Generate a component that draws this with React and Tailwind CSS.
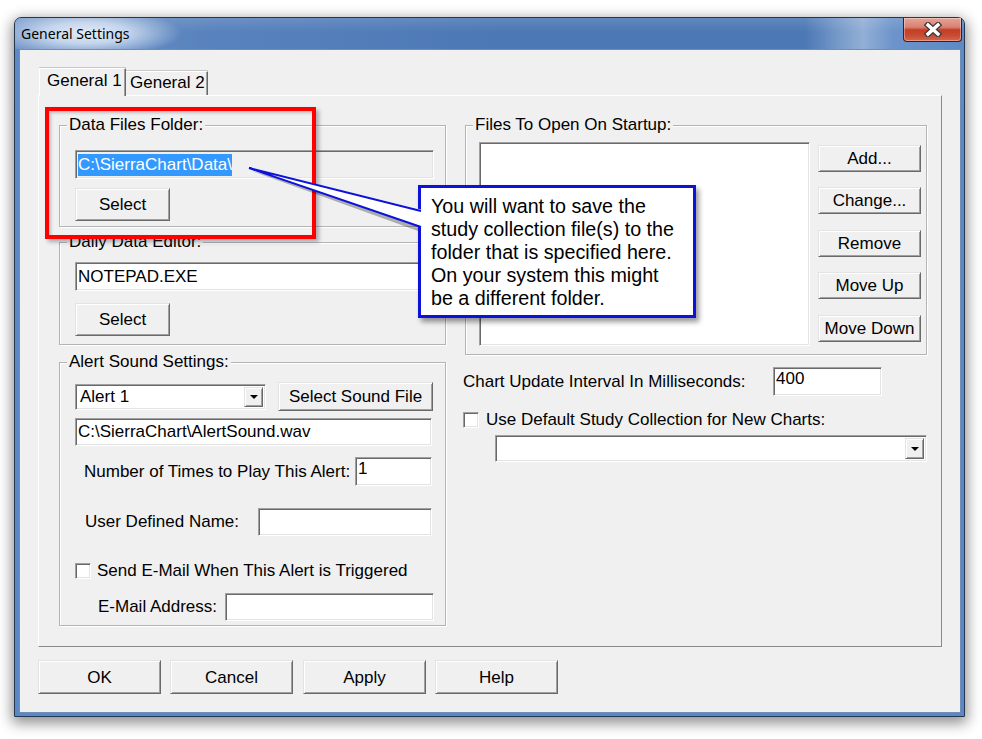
import React from "react";

const raised =
  "border border-t-[#e3e3e3] border-l-[#e3e3e3] border-r-[#696969] border-b-[#696969] shadow-[inset_1px_1px_0_#ffffff,inset_-1px_-1px_0_#a0a0a0] bg-[#f0f0f0]";
const sunken =
  "border border-t-[#a0a0a0] border-l-[#a0a0a0] border-r-white border-b-white shadow-[inset_1px_1px_0_#696969,inset_-1px_-1px_0_#e3e3e3]";

function Group({ label, className = "", children }) {
  return (
    <div
      className={`relative border border-[#b4b4b4] shadow-[inset_1px_1px_0_#ffffff,1px_1px_0_#ffffff] ${className}`}
    >
      <span className="absolute -top-[11px] left-[7px] px-[2px] bg-[#f0f0f0] leading-[20px] whitespace-nowrap">
        {label}
      </span>
      {children}
    </div>
  );
}

function Btn({ children, className = "" }) {
  return (
    <button
      type="button"
      className={`${raised} flex items-center justify-center leading-none whitespace-nowrap ${className}`}
    >
      {children}
    </button>
  );
}

function Input({ children, className = "" }) {
  return (
    <div
      className={`${sunken} flex items-center pl-[2px] leading-[20px] whitespace-nowrap overflow-hidden ${className}`}
    >
      {children}
    </div>
  );
}

function Tri() {
  return (
    <svg width="8" height="4" viewBox="0 0 8 4">
      <path d="M0 0H8L4 4Z" fill="#000" />
    </svg>
  );
}

function Combo({ text, className = "" }) {
  return (
    <div className={`${sunken} bg-white flex items-stretch p-[2px] ${className}`}>
      <div className="flex-1 flex items-center pl-[2px] leading-[20px] whitespace-nowrap">
        {text}
      </div>
      <div className={`${raised} w-[19px] flex items-center justify-center`}>
        <Tri />
      </div>
    </div>
  );
}

function Check() {
  return <div className={`${sunken} w-[16px] h-[16px] bg-white shrink-0`} />;
}

export default function App() {
  return (
    <div className="relative w-[982px] h-[739px] bg-white overflow-hidden font-['Liberation_Sans',Arial,sans-serif] text-[17px] text-black">
      {/* Window */}
      <div className="ml-[14px] mt-[17px] w-[951px] h-[700px] rounded-t-[7px] border border-[#26384f] bg-[linear-gradient(180deg,#5d89c4,#5a87c5)] shadow-[0_4px_14px_2px_rgba(0,0,0,0.45)] flex flex-col">
        {/* Title bar */}
        <div className="h-[31px] flex items-start rounded-t-[6px] bg-[radial-gradient(ellipse_95px_24px_at_72px_15px,rgba(232,240,250,0.97),rgba(225,235,248,0.75)_45%,rgba(225,235,248,0)_100%),linear-gradient(180deg,rgba(255,255,255,0.12),rgba(255,255,255,0)_45%),linear-gradient(90deg,#6f94c7_0px,#5882bd_200px,#4c78b5_480px,#4c78b5_790px,#7c9ecc_828px,#92afd6_848px,#6d94ca_878px,#5d89c5_949px)]">
          <div className="pl-[6px] pt-[6px] leading-[20px] font-['Noto_Sans',sans-serif] text-[14px] text-black">
            General Settings
          </div>
          <button
            type="button"
            className="ml-auto mr-[2px] w-[59px] h-[24px] rounded-b-[4px] border border-t-0 border-[#4a1b16] bg-[linear-gradient(180deg,#e6a396_0%,#d98170_40%,#c23d28_52%,#c84a33_75%,#d9654a_100%)] shadow-[inset_0_0_0_1px_rgba(255,255,255,0.35)] flex items-center justify-center"
          >
            <svg width="18" height="15" viewBox="0 0 18 15">
              <path d="M4 3L14 12M14 3L4 12" stroke="#3b3b3b" strokeWidth="6" strokeLinecap="square" />
              <path d="M4 3L14 12M14 3L4 12" stroke="#ffffff" strokeWidth="3.4" strokeLinecap="square" />
            </svg>
          </button>
        </div>

        {/* Client area */}
        <div className="ml-[4px] w-[942px] h-[664px] border border-[#6f8db8] bg-[#f0f0f0] pl-[18px] pt-[18px]">
          {/* Tabs */}
          <div className="flex items-end h-[27px] pl-[1px]">
            <div className="relative z-10 h-[28px] -mb-px w-[87px] bg-[#f0f0f0] border-t border-l border-r border-t-[#ffffff] border-l-[#ffffff] border-r-[#696969] shadow-[inset_-1px_0_0_#a0a0a0,0_-1px_0_#c8c8c8] pl-[7px] pt-[2px] leading-[20px] whitespace-nowrap">
              General 1
            </div>
            <div className="h-[24px] w-[82px] bg-[#f0f0f0] border-t border-r border-t-[#ffffff] border-r-[#696969] shadow-[inset_-1px_0_0_#a0a0a0,0_-1px_0_#c8c8c8] pl-[4px] pt-[1px] leading-[20px] whitespace-nowrap">
              General 2
            </div>
          </div>

          {/* Panel */}
          <div className="w-[904px] h-[552px] border border-t-white border-l-white border-r-[#8a8a8a] border-b-[#8a8a8a] flex pt-[29px] pl-[20px]">
            {/* Left column */}
            <div className="w-[387px] flex flex-col">
              <Group label="Data Files Folder:" className="w-[387px] h-[102px] pl-[15px] pt-[24px]">
                <Input className="w-[359px] h-[29px] bg-[#f0f0f0] pl-0">
                  <span className="bg-[#3399ff] text-white leading-[22px]">C:\SierraChart\Data\</span>
                </Input>
                <Btn className="mt-[9px] w-[95px] h-[33px]">Select</Btn>
              </Group>

              <Group label="Daily Data Editor:" className="mt-[15px] w-[387px] h-[103px] pl-[15px] pt-[19px]">
                <Input className="w-[359px] h-[29px] bg-white">NOTEPAD.EXE</Input>
                <Btn className="mt-[12px] w-[95px] h-[33px]">Select</Btn>
              </Group>

              <Group label="Alert Sound Settings:" className="mt-[17px] w-[387px] h-[264px] pl-[15px] pt-[19px]">
                <div className="flex items-center h-[29px]">
                  <Combo text="Alert 1" className="w-[191px] h-[26px]" />
                  <Btn className="ml-[12px] w-[155px] h-[29px]">Select Sound File</Btn>
                </div>
                <Input className="mt-[7px] w-[357px] h-[28px] bg-white">
                  C:\SierraChart\AlertSound.wav
                </Input>
                <div className="mt-[11px] flex items-center justify-between h-[29px] w-[357px]">
                  <span className="pl-[9px] whitespace-nowrap">Number of Times to Play This Alert:</span>
                  <Input className="w-[77px] h-[29px] bg-white items-start pt-[1px]">1</Input>
                </div>
                <div className="mt-[22px] flex items-center justify-between h-[28px] w-[357px]">
                  <span className="pl-[10px] whitespace-nowrap">User Defined Name:</span>
                  <Input className="w-[174px] h-[28px] bg-white" />
                </div>
                <div className="mt-[27px] flex items-center h-[16px]">
                  <Check />
                  <span className="ml-[6px] whitespace-nowrap">Send E-Mail When This Alert is Triggered</span>
                </div>
                <div className="mt-[14px] flex items-center justify-between h-[28px] w-[359px]">
                  <span className="pl-[23px] whitespace-nowrap">E-Mail Address:</span>
                  <Input className="w-[209px] h-[28px] bg-white" />
                </div>
              </Group>
            </div>

            {/* Right column */}
            <div className="ml-[17px] w-[464px] flex flex-col">
              <Group label="Files To Open On Startup:" className="ml-[2px] w-[462px] h-[230px] flex pl-[13px] pt-[16px]">
                <div className={`${sunken} bg-white w-[331px] h-[204px]`} />
                <div className="ml-[8px] pt-[3px] flex flex-col">
                  <Btn className="w-[103px] h-[27px]">Add...</Btn>
                  <Btn className="mt-[15px] w-[103px] h-[27px]">Change...</Btn>
                  <Btn className="mt-[16px] w-[103px] h-[27px]">Remove</Btn>
                  <Btn className="mt-[15px] w-[103px] h-[27px]">Move Up</Btn>
                  <Btn className="mt-[16px] w-[103px] h-[27px]">Move Down</Btn>
                </div>
              </Group>

              <div className="mt-[12px] flex items-center h-[29px]">
                <span className="w-[310px] whitespace-nowrap">Chart Update Interval In Milliseconds:</span>
                <Input className="w-[109px] h-[29px] bg-white items-start pt-[1px]">400</Input>
              </div>

              <div className="mt-[16px] flex items-center h-[16px]">
                <Check />
                <span className="ml-[7px] whitespace-nowrap">Use Default Study Collection for New Charts:</span>
              </div>

              <Combo text="" className="mt-[7px] ml-[32px] w-[432px] h-[27px]" />
            </div>
          </div>

          {/* Bottom buttons */}
          <div className="mt-[13px] flex">
            <Btn className="w-[123px] h-[34px] border-[#696969] shadow-[inset_1px_1px_0_#ffffff,inset_-1px_-1px_0_#a0a0a0,inset_0_0_0_1px_#e3e3e3]">
              OK
            </Btn>
            <Btn className="ml-[9px] w-[123px] h-[34px]">Cancel</Btn>
            <Btn className="ml-[10px] w-[123px] h-[34px]">Apply</Btn>
            <Btn className="ml-[9px] w-[123px] h-[34px]">Help</Btn>
          </div>
        </div>
      </div>

      {/* Red highlight annotation */}
      <div className="absolute left-[45px] top-[107px] w-[271px] h-[132px] border-4 border-[#ff0000] shadow-[3px_3px_4px_rgba(40,40,60,0.35),inset_2px_2px_3px_rgba(40,40,60,0.25)]" />

      {/* Callout */}
      <div className="absolute left-[418px] top-[185px] w-[278px] h-[133px] bg-white border-[3px] border-[#0c12d8] shadow-[3px_4px_5px_rgba(0,0,0,0.4)] pl-[10px] pt-[7px] text-[19.7px] leading-[23px]">
        <div className="whitespace-nowrap">You will want to save the</div>
        <div className="whitespace-nowrap">study collection file(s) to the</div>
        <div className="whitespace-nowrap">folder that is specified here.</div>
        <div className="whitespace-nowrap">On your system this might</div>
        <div className="whitespace-nowrap">be a different folder.</div>
      </div>
      <svg
        className="absolute left-[240px] top-[155px]"
        width="190"
        height="110"
        viewBox="0 0 190 110"
      >
        <polygon points="12,16 178,60 178,76" fill="rgba(0,0,0,0.28)" />
        <polygon points="9,13 183,55 183,73" fill="#ffffff" />
        <polyline
          points="181,56 9,13 181,72"
          fill="none"
          stroke="#0c12d8"
          strokeWidth="2"
          strokeLinejoin="miter"
        />
      </svg>
    </div>
  );
}
